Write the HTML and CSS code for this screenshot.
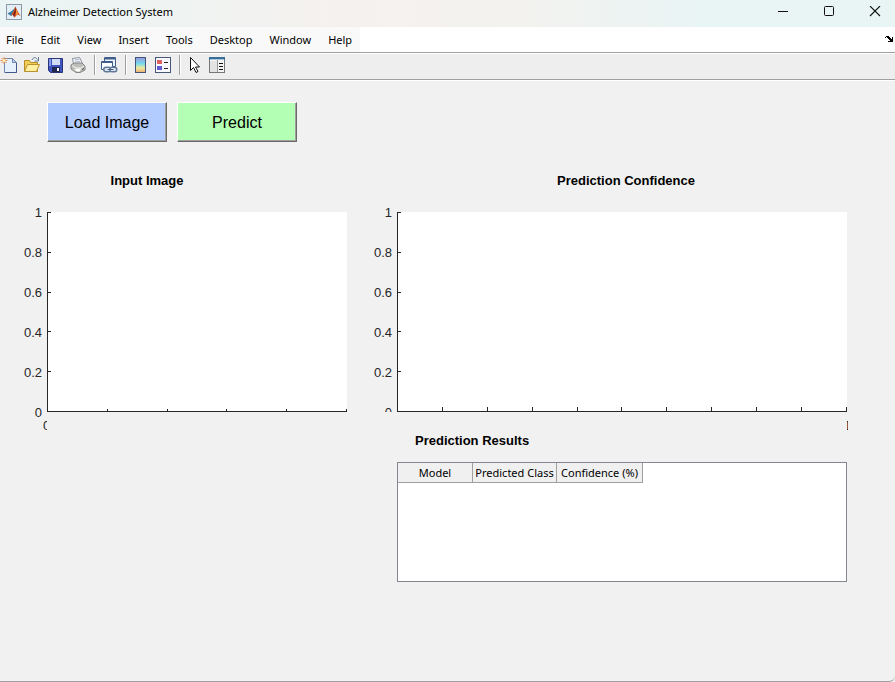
FILE: index.html
```html
<!DOCTYPE html>
<html lang="en">
<head>
<meta charset="utf-8">
<title>Alzheimer Detection System</title>
<link rel="stylesheet" href="styles.css">
</head>
<body>
<div class="window">
  <header class="titlebar">
    <svg class="app-icon" width="16" height="16" viewBox="0 0 16 16" aria-hidden="true">
      <rect x=".5" y=".5" width="15" height="15" fill="#e3edf5" stroke="#8b9aa6"/>
      <path d="M1.5 9.5 5 7.5 8 5l1-2-1 6-3 3z" fill="#397ca5"/>
      <path d="M5 11.5 7 8l2.500-5.500L11.500 7l3 5-3-1.500-3 3-1.500-2.500z" fill="#d85520"/>
      <path d="M9.500 2.500 10 8l-2 5-1-2 1.500-4z" fill="#7d241c"/>
      <path d="M10 5l2 5-2 1z" fill="#f59b35"/>
    </svg>
    <h1 class="title">Alzheimer Detection System</h1>
    <div class="controls">
      <button class="control" aria-label="Minimize"><svg width="12" height="12" viewBox="0 0 12 12"><path d="M1 5.500h10" stroke="#111"/></svg></button>
      <button class="control" aria-label="Maximize"><svg width="12" height="12" viewBox="0 0 12 12"><rect x="1.500" y=".5" width="9" height="9" rx="1" fill="none" stroke="#111"/></svg></button>
      <button class="control" aria-label="Close"><svg width="12" height="12" viewBox="0 0 12 12"><path d="M1 0l10 10M11 0 1 10" stroke="#111" stroke-width="1.100"/></svg></button>
    </div>
  </header>

  <nav class="menubar">
    <div class="menus">
      <button class="menu">File</button>
      <button class="menu">Edit</button>
      <button class="menu">View</button>
      <button class="menu">Insert</button>
      <button class="menu">Tools</button>
      <button class="menu">Desktop</button>
      <button class="menu">Window</button>
      <button class="menu">Help</button>
    </div>
    <button class="dock" aria-label="Dock figure"><svg width="8" height="7" viewBox="0 0 8 7" shape-rendering="crispEdges"><path d="M0 1h1V0h3v1h1v1h1v1h1V1h1v5H3V5h2V4H4V3H3V2H2V1H1v1H0z" fill="#000"/></svg></button>
  </nav>

  <div class="toolbar">
    <button class="tool" aria-label="New figure"><svg width="18" height="18" viewBox="0 0 18 18"><path d="M4.500 2.500h8l4 4v10h-12z" fill="#e6effc" stroke="#7187ad"/><path d="M5.500 16.500h11v-10" fill="none" stroke="#405a89"/><path d="M12.500 2.500v4h4z" fill="#b9cdec" stroke="#7187ad"/><path d="M4 1v7M.500 4.500h7M1.500 2l5 5M6.500 2l-5 5" stroke="#e38c59"/><circle cx="4" cy="4.500" r="1.500" fill="#fff0a8"/></svg></button>
    <button class="tool" aria-label="Open file"><svg width="18" height="18" viewBox="0 0 18 18"><path d="M1.500 15.500v-11h5l1 2h7v9z" fill="#f3cf57" stroke="#b58b25"/><path d="M1.500 15.500l3-7h12l-3 7z" fill="#fff0a1" stroke="#bb912d"/><path d="M9 4c1-3 4-3 5.500-.500M15.500 1v4h-4" fill="none" stroke="#647f9c"/></svg></button>
    <button class="tool" aria-label="Save figure"><svg width="18" height="18" viewBox="0 0 18 18"><path d="M2.500 2.500h14v14h-12l-2-2z" fill="#4054be" stroke="#293479"/><path d="M6 3h8v6H6z" fill="#d3dcf5"/><path d="M3 3h2v7H3z" fill="#8596ed"/><path d="M6 11h8v5H6z" fill="#202750"/><path d="M11 12h2v3h-2z" fill="#fff"/></svg></button>
    <button class="tool" aria-label="Print figure"><svg width="18" height="18" viewBox="0 0 18 18"><path d="M4.500 8 3.500 2.500l7-1 3 6z" fill="#f8fbff" stroke="#8b929e"/><path d="M5.500 4l5-.500M6 6l5-.500" stroke="#a6b3c7"/><path d="M2 9l3-2h8l3 3v4l-5 2.500H7L2 13z" fill="#bdbdba" stroke="#858582"/><path d="M3 9.500l4 2.500h5l3-2" fill="none" stroke="#f6f6f4"/><path d="M5 14l3-1.500 4 .5-2 3z" fill="#fff"/><path d="M13 13.500l2-1" stroke="#545454"/></svg></button>
    <span class="separator"></span>
    <button class="tool" aria-label="Link plot"><svg width="18" height="18" viewBox="0 0 18 18"><path d="M4.500 1.500h11v9h-11z" fill="#edf3fc" stroke="#405e8b"/><path d="M5 2.500h10" stroke="#405e8b" stroke-width="2"/><path d="M1.500 5.500h11v8h-11z" fill="#fff" stroke="#405e8b"/><path d="M2 6.500h10" stroke="#405e8b"/><rect x="3.750" y="11.250" width="7" height="4.500" rx="2.250" fill="#dde5ef" stroke="#617796" stroke-width="1.500"/><rect x="9.750" y="11.250" width="7" height="4.500" rx="2.250" fill="#dde5ef" stroke="#617796" stroke-width="1.500"/><path d="M7.500 13.500h6" stroke="#4c6482"/></svg></button>
    <span class="separator"></span>
    <button class="tool" aria-label="Insert colorbar"><svg width="18" height="18" viewBox="0 0 18 18"><defs><linearGradient id="colorbar" x2="0" y2="1"><stop stop-color="#9998dc"/><stop offset=".4" stop-color="#76d9ee"/><stop offset=".7" stop-color="#eee99d"/><stop offset="1" stop-color="#efad72"/></linearGradient></defs><rect x="4.500" y="1.500" width="10" height="15" fill="url(#colorbar)" stroke="#425477"/></svg></button>
    <button class="tool" aria-label="Insert legend"><svg width="18" height="18" viewBox="0 0 18 18"><rect x="1.500" y="1.500" width="15" height="15" fill="#f8f9ff" stroke="#465779"/><path d="M3 4h5v4H3z" fill="#dc6261"/><path d="M3 10h5v4H3z" fill="#625bd0"/><path d="M10 6.500h4M10 12.500h4" stroke="#222"/></svg></button>
    <span class="separator"></span>
    <button class="tool" aria-label="Edit plot"><svg width="18" height="18" viewBox="0 0 18 18"><path d="M5.500 1.500v13l3-3 2.500 5 2-1-2.500-4.500h4z" fill="#fff" stroke="#111"/></svg></button>
    <button class="tool" aria-label="Property inspector"><svg width="18" height="18" viewBox="0 0 18 18"><rect x="1.500" y="1.500" width="15" height="15" fill="#f4f4f4" stroke="#777"/><path d="M1 1h16v3H1z" fill="#376e99"/><path d="M2 3.500h14" stroke="#a9c6dd"/><path d="M2 5h7v11H2z" fill="#e3e3e3"/><path d="M9.500 4v12" stroke="#999"/><path d="M11 7.500h4M11 10.500h4M11 13.500h4" stroke="#111"/></svg></button>
  </div>

  <main class="canvas">
    <div class="actions">
      <button class="action load">Load Image</button>
      <button class="action predict">Predict</button>
    </div>

    <div class="plots">
      <h2 class="plot-title input-title">Input Image</h2>
      <h2 class="plot-title confidence-title">Prediction Confidence</h2>
      <div class="y-labels"><span>1</span><span>0.8</span><span>0.6</span><span>0.4</span><span>0.2</span><span>0</span></div>
      <div class="plot">
        <div class="y-ticks"><i></i><i></i><i></i><i></i><i></i><i></i></div>
        <div class="x-ticks short"><i></i><i></i><i></i><i></i><i></i><i></i></div>
        <span class="x-label first">0</span>
      </div>
      <div class="y-labels cropped"><span>1</span><span>0.8</span><span>0.6</span><span>0.4</span><span>0.2</span><span>0</span></div>
      <div class="plot">
        <div class="y-ticks"><i></i><i></i><i></i><i></i><i></i><i></i></div>
        <div class="x-ticks"><i></i><i></i><i></i><i></i><i></i><i></i><i></i><i></i><i></i><i></i><i></i></div>
        <span class="x-label last">1</span>
      </div>
      <section class="results">
        <h2 class="results-title">Prediction Results</h2>
        <div class="table-box">
          <table>
            <thead><tr><th class="model">Model</th><th class="class">Predicted Class</th><th class="confidence">Confidence (%)</th></tr></thead>
            <tbody></tbody>
          </table>
        </div>
      </section>
    </div>
  </main>
</div>
</body>
</html>
```
FILE: styles.css
```css
* { box-sizing: border-box; }

body {
  margin: 0;
  background: #f1f1f1;
  color: #000;
  font: 11px/16px "Noto Sans", "Open Sans", sans-serif;
}

button {
  margin: 0;
  padding: 0;
  border: 0;
  background: none;
  color: inherit;
  font: inherit;
}

h1, h2 { margin: 0; font-size: inherit; }
svg { display: block; }

.window {
  display: flex;
  flex-direction: column;
  min-height: 100vh;
  border-bottom: 1px solid #a0a0a0;
  border-bottom-right-radius: 6px;
}

.titlebar {
  display: flex;
  align-items: center;
  height: 27px;
  padding: 0 4px 4px 6px;
  background: linear-gradient(90deg, #eaf4f4 0, #eff3f2 20%, #f5f1ee 38%, #f3f2ef 58%, #e9f4f4 78%);
}

.title { margin-left: 6px; font-weight: 400; }

.controls { display: flex; gap: 14px; margin-left: auto; }

.control {
  display: grid;
  place-items: center;
  width: 32px;
  height: 23px;
}

.menubar {
  display: flex;
  align-items: stretch;
  height: 26px;
  border-bottom: 1px solid #a0a0a0;
  background: #fff;
}

.menus { display: flex; background: #f9f9f9; }
.menu { padding: 0 8px 0 9px; }
.menu:first-child { padding-left: 6px; }
.dock { margin-left: auto; padding-right: 2px; }

.toolbar {
  display: flex;
  align-items: center;
  height: 27px;
  padding-bottom: 3px;
  border-top: 1px solid #fff;
  border-bottom: 1px solid #a0a0a0;
  background: #eee;
}

.tool { width: 23px; height: 18px; }

.separator {
  width: 2px;
  height: 20px;
  margin: 0 4px 0 2px;
  border-left: 1px solid #a0a0a0;
  border-right: 1px solid #fff;
}

.canvas {
  flex: 1;
  padding: 21px 48px 40px 0;
  border-top: 1px solid #fff;
  font-family: "Liberation Sans", sans-serif;
}

.actions { display: flex; gap: 10px; padding-left: 47px; }

.action {
  width: 120px;
  height: 40px;
  padding-top: 2px;
  border: 1px solid;
  border-color: #fff #696969 #696969 #fff;
  box-shadow: inset -1px -1px #a0a0a0;
  font-size: 16px;
}

.load { background: #b3ccff; }
.predict { background: #b3ffb3; }

.plots {
  display: grid;
  grid-template-columns: 47px 2fr 50px 3fr;
  grid-template-rows: 16px 200px auto;
  row-gap: 23px;
  margin-top: 31px;
}

.plot-title, .results-title { font-size: 13px; line-height: 16px; }
.plot-title { text-align: center; }
.input-title { grid-column: 2; margin-right: 100px; }
.confidence-title { grid-column: 4; padding-left: 8px; }

.y-labels {
  display: flex;
  flex-direction: column;
  justify-content: space-between;
  margin: -7px 0 -9px;
  padding-right: 5px;
  color: #262626;
  font-size: 13px;
  line-height: 16px;
  text-align: right;
}

.cropped { clip-path: inset(0 0 9px 0); }

.plot {
  position: relative;
  border-left: 1px solid #262626;
  border-bottom: 1px solid #262626;
  background: #fff;
}

.y-ticks, .x-ticks {
  position: absolute;
  inset: 0 0 -1px -1px;
  display: flex;
  justify-content: space-between;
}

.y-ticks { flex-direction: column; }
.y-ticks i { width: 4px; height: 1px; background: #262626; }
.x-ticks { align-items: flex-end; }
.x-ticks i { width: 1px; height: 5px; background: #262626; }
.short i { height: 3px; }

.x-label {
  position: absolute;
  top: 206px;
  overflow: hidden;
  color: #262626;
  font-size: 13px;
  line-height: 16px;
}

.first { left: -5px; width: 4px; }
.last { right: -1px; width: 1px; text-indent: -3px; }

.results { grid-column: 4; margin-top: -2px; }
.results-title { padding-left: 18px; }

.table-box {
  height: 120px;
  margin-top: 13px;
  border: 1px solid #828790;
  background: #fff;
}

table {
  border-collapse: separate;
  border-spacing: 0;
  font: 11px/16px "Noto Sans", "Open Sans", sans-serif;
}

th {
  height: 20px;
  padding: 2px 1px 1px;
  border-right: 1px solid #a0a0a0;
  border-bottom: 1px solid #a0a0a0;
  background: #f0f0f0;
  font-weight: 400;
  white-space: nowrap;
}

.model { width: 75px; }
.class { width: 84px; }
.confidence { width: 86px; }
```
